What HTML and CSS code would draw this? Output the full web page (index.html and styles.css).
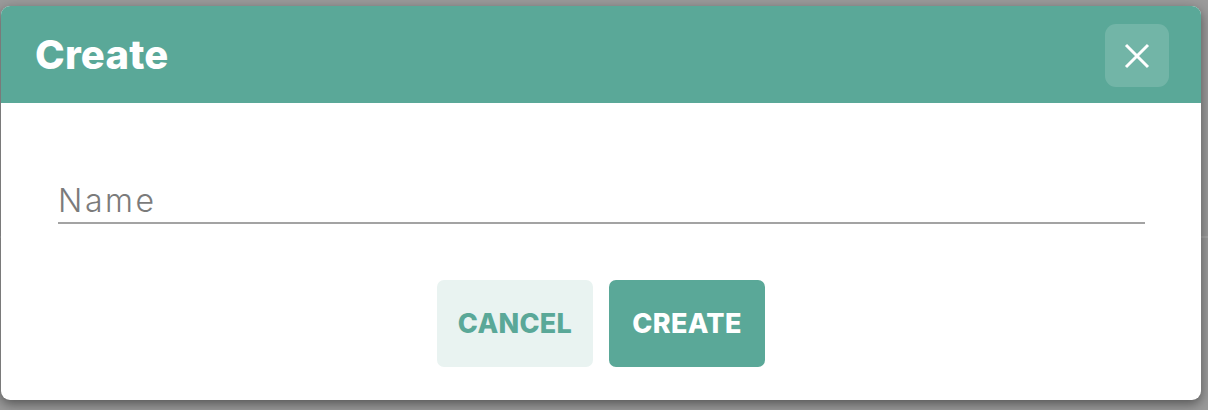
FILE: index.html
```html
<!DOCTYPE html>
<html lang="en">
<head>
  <meta charset="UTF-8">
  <meta name="viewport" content="width=device-width, initial-scale=1">
  <title>Create</title>
  <link rel="stylesheet" href="styles.css">
</head>
<body>
  <div class="backdrop-line"></div>

  <!-- Create dialog -->
  <div class="dialog">
    <div class="dialog-header">
      <h1 class="dialog-title">Create</h1>
      <button class="close-btn" aria-label="Close">
        <svg width="26" height="26" viewBox="0 0 26 26">
          <path d="M2 2 L24 24 M24 2 L2 24" stroke="#ffffff" stroke-width="3" stroke-linecap="butt" fill="none"/>
        </svg>
      </button>
    </div>

    <div class="dialog-body">
      <input class="name-input" type="text" placeholder="Name">

      <div class="actions">
        <button class="btn btn-cancel">Cancel</button>
        <button class="btn btn-create">Create</button>
      </div>
    </div>
  </div>
</body>
</html>
```

FILE: styles.css
```css
/* Page behind the dialog */
body {
  margin: 0;
  padding: 6px 7px 0 1px;
  background-color: #9a9a9a;
  font-family: Inter, "Noto Sans", sans-serif;
  height: 404px;
  overflow: hidden;
}
.backdrop-line {
  position: absolute;
  left: 0;
  right: 0;
  top: 236px;
  height: 2px;
  background-color: #a6a6a6;
}

/* Dialog */
.dialog {
  position: relative;
  width: 1200px;
  background-color: #ffffff;
  border-radius: 9px;
  overflow: hidden;
  box-shadow: 0 4px 12px rgba(0, 0, 0, 0.45);
}
.dialog-header {
  display: flex;
  align-items: center;
  justify-content: space-between;
  height: 97px;
  box-sizing: border-box;
  padding: 12px 32px 10px 34px;
  background-color: #5aa898; /* Teal header */
}
.dialog-title {
  margin: 0 0 3px 0;
  font-size: 40px;
  font-weight: 800;
  color: #ffffff;
  letter-spacing: 0.2px;
}
.close-btn {
  display: flex;
  align-items: center;
  justify-content: center;
  width: 64px;
  height: 63px;
  border: none;
  border-radius: 11px;
  background-color: rgba(255, 255, 255, 0.15);
  padding: 0;
  cursor: pointer;
}

/* Body */
.dialog-body {
  padding: 77px 56px 33px 56px;
}
.name-input {
  display: block;
  width: calc(100% - 1px);
  margin-left: 1px;
  box-sizing: border-box;
  border: none;
  border-bottom: 2px solid #a3a3a3;
  padding: 0 0 2px 0;
  height: 44px;
  font-family: Inter, "Noto Sans", sans-serif;
  font-size: 32px;
  font-weight: 300;
  letter-spacing: 2.6px;
  color: #333333;
  outline: none;
}
.name-input::placeholder {
  color: #7b7b7b;
}
.actions {
  display: flex;
  justify-content: center;
  gap: 16px;
  margin-top: 56px;
}
.btn {
  width: 156px;
  height: 87px;
  border: none;
  border-radius: 7px;
  font-family: Inter, "Noto Sans", sans-serif;
  font-size: 27px;
  font-weight: 800;
  text-transform: uppercase;
  letter-spacing: 0.3px;
  cursor: pointer;
}
.btn-cancel {
  background-color: #e9f3f1;
  color: #5aa898;
}
.btn-create {
  background-color: #5aa898;
  color: #ffffff;
}
```
